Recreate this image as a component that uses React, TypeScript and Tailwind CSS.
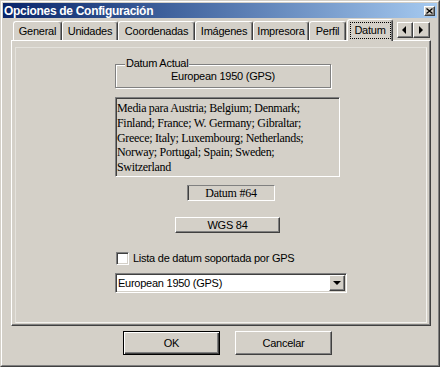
import React from 'react';

// Win2000-style bevels
const raised =
  'border border-t-white border-l-white border-r-[#404040] border-b-[#404040] shadow-[inset_-1px_-1px_0_#808080]';
const sunken =
  'border border-t-[#808080] border-l-[#808080] border-r-white border-b-white shadow-[inset_1px_1px_0_#404040,inset_-1px_-1px_0_#d4d0c8]';
const sans = "font-['Liberation_Sans',Arial,sans-serif] text-[11px] tracking-[-0.25px] text-black";
const serif = "font-['Liberation_Serif','Times_New_Roman',serif] text-[12px] text-black";

const tabs = [
  { label: 'General', w: 'w-[49px]' },
  { label: 'Unidades', w: 'w-[56px]' },
  { label: 'Coordenadas', w: 'w-[77px]' },
  { label: 'Imágenes', w: 'w-[58px]' },
  { label: 'Impresora', w: 'w-[56px]' },
  { label: 'Perfil', w: 'w-[37px]' },
];

const Arrow = ({ dir }: { dir: 'left' | 'right' | 'down' }) => {
  const pts = {
    left: '5,0 5,8 1,4',
    right: '1,0 1,8 5,4',
    down: '0,2 8,2 4,6',
  }[dir];
  return (
    <svg width="8" height="8" viewBox="0 0 8 8" className="block">
      <polygon points={pts} fill="#000" />
    </svg>
  );
};

export default function App() {
  return (
    <div className={`w-[440px] h-[367px] bg-[#d4d0c8] border border-t-[#d4d0c8] border-l-[#d4d0c8] border-r-[#404040] border-b-[#404040] ${sans}`}>
      <div className="h-full border border-t-white border-l-white border-r-[#808080] border-b-[#808080] p-[1px] flex flex-col">
        {/* Title bar */}
        <div className="h-[15px] flex items-center justify-between bg-gradient-to-r from-[#0a246a] to-[#a6caf0] pl-[1px] pr-[2px]">
          <span className="text-white font-bold text-[12px] tracking-[-0.3px] leading-none">
            Opciones de Configuración
          </span>
          <div className={`w-[11px] h-[10px] bg-[#d4d0c8] flex items-center justify-center ${raised}`}>
            <svg width="7" height="6" viewBox="0 0 7 6" className="block">
              <path d="M0.5 0.5 L6.5 5.5 M6.5 0.5 L0.5 5.5" stroke="#000" strokeWidth="1.3" />
            </svg>
          </div>
        </div>

        {/* Tabs */}
        <div className="h-[22px] flex items-end pl-[10px]">
          {tabs.map((t) => (
            <div
              key={t.label}
              className={`${t.w} h-[19px] flex items-center justify-center border-t border-l border-r border-t-white border-l-white border-r-[#404040] shadow-[inset_-1px_0_0_#808080] rounded-t-[3px]`}
            >
              {t.label}
            </div>
          ))}
          <div className="relative z-10 ml-[1px] -mb-[1px] w-[46px] h-[22px] bg-[#d4d0c8] flex justify-center pt-[2px] border-t border-l border-r border-t-white border-l-white border-r-[#404040] shadow-[inset_-1px_0_0_#808080] rounded-t-[3px]">
            <span className="w-[41px] h-[17px] flex items-center justify-center border border-dotted border-black">
              Datum
            </span>
          </div>
          <div className="self-start mt-[4px] ml-[4px] flex">
            <div className={`w-[16px] h-[16px] flex items-center justify-center ${raised}`}>
              <Arrow dir="left" />
            </div>
            <div className={`w-[17px] h-[16px] flex items-center justify-center ${raised}`}>
              <Arrow dir="right" />
            </div>
          </div>
        </div>

        {/* Tab page */}
        <div className="ml-[8px] w-[420px] h-[286px] border border-t-white border-l-white border-r-[#404040] border-b-[#404040] shadow-[inset_-1px_-1px_0_#808080] pt-[6px] pl-[3px] pr-[3px] pb-[2px]">
          <div className="h-full border border-t-[#e4e2dc] border-l-[#e4e2dc] border-r-[#f4f3f0] border-b-[#f4f3f0] flex flex-col items-start">
            {/* Datum Actual group */}
            <div className="relative mt-[16px] ml-[99px] w-[216px] h-[24px] border border-[#808080] shadow-[inset_1px_1px_0_#fff,1px_1px_0_#fff]">
              <span className="absolute -top-[8px] left-[9px] bg-[#d4d0c8] px-[1px] leading-[13px]">
                Datum Actual
              </span>
              <div className="h-full flex items-center justify-center pt-[1px]">European 1950 (GPS)</div>
            </div>

            {/* Description */}
            <div className={`mt-[9px] ml-[99px] w-[225px] h-[80px] pt-[3px] pl-[1px] leading-[14.75px] tracking-[-0.3px] ${serif} ${sunken}`}>
              Media para Austria; Belgium; Denmark;
              <br />
              Finland; France; W. Germany; Gibraltar;
              <br />
              Greece; Italy; Luxembourg; Netherlands;
              <br />
              Norway; Portugal; Spain; Sweden;
              <br />
              Switzerland
            </div>

            {/* Datum number */}
            <div className={`mt-[8px] ml-[171px] w-[88px] h-[16px] flex items-center justify-center border border-t-[#808080] border-l-[#808080] border-r-white border-b-white shadow-[inset_1px_0_0_#404040] ${serif}`}>
              Datum #64
            </div>

            {/* WGS 84 button */}
            <div className={`mt-[16px] ml-[159px] w-[105px] h-[16px] flex items-center justify-center ${raised}`}>
              WGS 84
            </div>

            {/* Checkbox */}
            <div className="mt-[19px] ml-[100px] flex items-center gap-[4px]">
              <div className={`w-[13px] h-[13px] bg-white ${sunken}`} />
              <span className="leading-[13px]">Lista de datum soportada por GPS</span>
            </div>

            {/* Select */}
            <div className={`mt-[8px] ml-[99px] w-[232px] h-[20px] bg-white flex items-center justify-between pl-[2px] pr-[1px] ${sunken}`}>
              <span>European 1950 (GPS)</span>
              <div className={`w-[16px] h-[16px] bg-[#d4d0c8] flex items-center justify-center ${raised}`}>
                <Arrow dir="down" />
              </div>
            </div>
          </div>
        </div>

        {/* Dialog buttons */}
        <div className="mt-[5px] flex pl-[120px] gap-[15px]">
          <div className="w-[97px] h-[24px] flex items-center justify-center border border-black shadow-[inset_1px_1px_0_#fff,inset_-1px_-1px_0_#404040,inset_-2px_-2px_0_#808080]">
            OK
          </div>
          <div className={`w-[97px] h-[24px] flex items-center justify-center ${raised}`}>Cancelar</div>
        </div>
      </div>
    </div>
  );
}
